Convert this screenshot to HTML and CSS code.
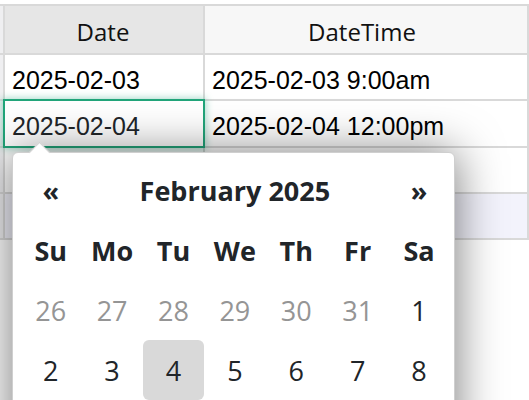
FILE: index.html
```html
<!DOCTYPE html>
<html>
<head>
<meta charset="utf-8">
<link rel="stylesheet" href="styles.css">
</head>
<body>
<div class="sheet">
  <div class="gutter hdr"></div>
  <div class="hcell sorted">Date</div>
  <div class="hcell">DateTime</div>

  <div class="gutter"></div>
  <div class="cell">2025-02-03</div>
  <div class="cell">2025-02-03 9:00am</div>

  <div class="gutter"></div>
  <div class="cell selected">2025-02-04</div>
  <div class="cell">2025-02-04 12:00pm</div>

  <div class="gutter"></div>
  <div class="cell"></div>
  <div class="cell"></div>

  <div class="gutter"></div>
  <div class="cell new"></div>
  <div class="cell new"></div>

  <div class="picker">
    <span class="arrow"></span>
    <div class="cal">
      <div class="nav">«</div>
      <div class="title">February 2025</div>
      <div class="nav">»</div>

      <div class="dow">Su</div><div class="dow">Mo</div><div class="dow">Tu</div><div class="dow">We</div><div class="dow">Th</div><div class="dow">Fr</div><div class="dow">Sa</div>

      <div class="day old">26</div><div class="day old">27</div><div class="day old">28</div><div class="day old">29</div><div class="day old">30</div><div class="day old">31</div><div class="day">1</div>
      <div class="day">2</div><div class="day">3</div><div class="day active">4</div><div class="day">5</div><div class="day">6</div><div class="day">7</div><div class="day">8</div>
    </div>
  </div>
</div>
</body>
</html>
```
FILE: styles.css
```css
html, body {
  margin: 0;
  padding: 0;
  background: #fff;
  overflow: hidden;
  height: 400px;
}

.sheet {
  position: relative;
  margin-top: 4px;
  display: grid;
  grid-template-columns: 3px 198px 322px;
  grid-template-rows: 47px 44px 45px 44px 44px;
  gap: 2px;
  padding: 2px 2px 2px 0;
  background: #d9d9d9;
  width: 529px;
  box-sizing: border-box;
}

.gutter {
  background: #efeff1;
}

.hcell {
  background: #f7f7f7;
  font-family: "Open Sans", sans-serif;
  font-size: 24px;
  color: #111;
  display: flex;
  align-items: center;
  justify-content: center;
  padding-top: 3px;
  padding-right: 8px;
}

.hcell.sorted {
  background: #e6e6e6;
  padding-right: 2px;
}

.cell {
  background: #fff;
  font-family: "Liberation Sans", Arial, sans-serif;
  font-size: 25px;
  color: #000;
  display: flex;
  align-items: center;
  padding: 6px 7px 0;
  white-space: nowrap;
  overflow: hidden;
}

.cell.new {
  background: #f3f3fc;
}

.cell.selected {
  position: relative;
  z-index: 1;
  color: #212529;
  box-shadow: 0 0 0 2px #22a57a, 0 0 7px 3px rgba(34, 165, 122, 0.4);
}

.picker {
  position: absolute;
  left: 12px;
  top: 148px;
  width: 443px;
  height: 300px;
  box-sizing: border-box;
  background: #fff;
  border: 1px solid #cfcfcf;
  border-radius: 6px;
  box-shadow: 0 2px 45px 2px rgba(0, 0, 0, 0.5);
  z-index: 2;
  padding: 8px 5px 0 7px;
  font-family: "Open Sans", sans-serif;
  color: #212529;
}

.arrow {
  position: absolute;
  left: 19px;
  top: -8px;
  width: 14px;
  height: 14px;
  background: #fff;
  border-top: 1px solid #cfcfcf;
  border-left: 1px solid #cfcfcf;
  transform: rotate(45deg);
}

.cal {
  display: grid;
  grid-template-columns: repeat(7, 61.4px);
  grid-template-rows: 59px 60px 60px 60px;
  font-size: 27px;
}

.nav, .title, .dow, .day {
  display: flex;
  align-items: center;
  justify-content: center;
}

.nav {
  font-weight: 700;
}

.title {
  grid-column: span 5;
  font-weight: 700;
}

.dow {
  font-weight: 700;
}

.day {
  border-radius: 6px;
}

.day.old {
  color: #959595;
}

.day.active {
  background: #d9d9d9;
}
```
